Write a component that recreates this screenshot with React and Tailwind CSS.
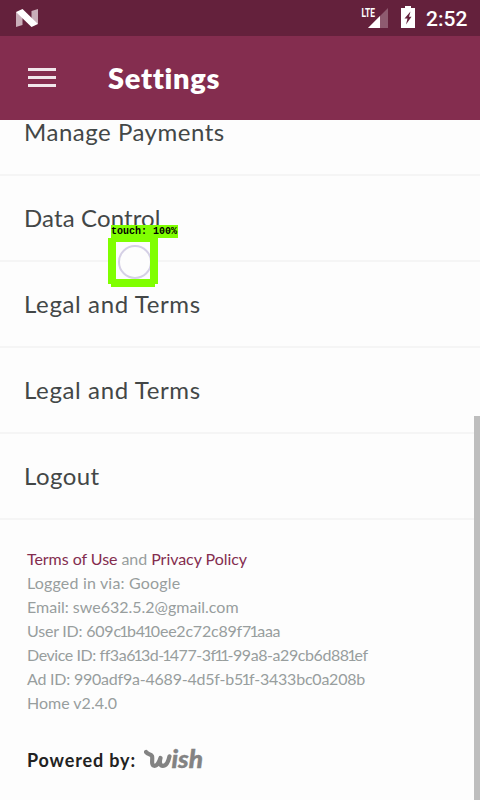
import { Fragment } from 'react';

const items = [
  { label: 'Manage Payments', spacing: 'tracking-[0.52px]' },
  { label: 'Data Control', spacing: 'tracking-[0.12px]' },
  { label: 'Legal and Terms', spacing: 'tracking-[0.63px]' },
  { label: 'Legal and Terms', spacing: 'tracking-[0.63px]' },
  { label: 'Logout', spacing: 'tracking-[0.45px]' },
];

const details = [
  { text: 'Logged in via: Google', spacing: 'tracking-[0.18px]' },
  { text: 'Email: swe632.5.2@gmail.com', spacing: 'tracking-normal' },
  { text: 'User ID: 609c1b410ee2c72c89f71aaa', spacing: 'tracking-[-0.21px]' },
  { text: 'Device ID: ff3a613d-1477-3f11-99a8-a29cb6d881ef', spacing: 'tracking-[-0.43px]' },
  { text: 'Ad ID: 990adf9a-4689-4d5f-b51f-3433bc0a208b', spacing: 'tracking-[-0.22px]' },
  { text: 'Home v2.4.0', spacing: 'tracking-normal' },
];

// Sets the digit 1 on a narrower width than the font's tabular figures.
function NarrowOnes({ text }) {
  return text.split('1').map((part, i) => (
    <Fragment key={i}>
      {i > 0 && <span className="-mx-[1.5px]">1</span>}
      {part}
    </Fragment>
  ));
}

function StatusBar() {
  return (
    <div className="flex h-9 shrink-0 items-center bg-[#64213c] pl-4 pr-3">
      <svg width="22" height="18" viewBox="0 0 22 18">
        <path d="M0 3 L6.5 5 V16 L0 18 Z" fill="#c9aeb9" />
        <path d="M15.5 2 L22 0 V15 L15.5 13 Z" fill="#c9aeb9" />
        <path d="M0 3 L6.5 0 L22 15 L15.5 18 Z" fill="#fff" />
      </svg>
      <div className="ml-auto flex items-center">
        <svg width="28" height="24" viewBox="0 0 28 24">
          <path d="M28 2 V22 H8 Z" fill="#8e5b70" />
          <path d="M20 10 V22 H8 Z" fill="#fff" />
          <path d="M0 0 H15.500 V12 H0 Z" fill="#64213c" />
          <text x="1.500" y="11" fontSize="12.500" fontWeight="700" textLength="13.500" lengthAdjust="spacingAndGlyphs" fill="#fff" fontFamily="Roboto, sans-serif">LTE</text>
        </svg>
        <svg width="14" height="22" viewBox="0 0 14 22" className="ml-[13px] mb-0.5">
          <path d="M4 0 H10 V2 H14 V22 H0 V2 H4 Z" fill="#fff" />
          <path d="M9.500 5.500 L3.500 12.500 H6.500 L5 18.500 L10.500 10.800 H8 Z" fill="#64213c" />
        </svg>
        <span className="ml-[11px] mt-0.5 w-[42px] whitespace-nowrap font-['Roboto',sans-serif] text-[21px] leading-6 font-medium text-white">2:52</span>
      </div>
    </div>
  );
}

function WishLogo() {
  return (
    <svg width="62" height="26" viewBox="0 0 62 26" fill="none">
      <path
        d="M2 5 C4 8 6.500 6.500 8 9 C9 11.500 6.500 18.800 10.500 18.800 C14 18.800 15.500 14 16.500 11 C15.500 14.500 15.500 18.800 19 18.800 C23 18.800 24.500 14 25.500 9.300"
        stroke="#838383" strokeWidth="4.200" strokeLinecap="round" strokeLinejoin="round"
      />
      <text x="27.500" y="21" fontSize="25" fontWeight="900" fontStyle="italic" textLength="31.500" lengthAdjust="spacingAndGlyphs" fill="#838383" stroke="#838383" strokeWidth="0.400" fontFamily="Lato, sans-serif">ish</text>
    </svg>
  );
}

export default function App() {
  return (
    <div className="relative flex h-[800px] w-[480px] flex-col overflow-hidden bg-[#fdfdfd] font-['Lato',sans-serif]">
      <StatusBar />
      <header className="flex h-[84px] shrink-0 items-center bg-[#842d4f] pl-7">
        <div className="mb-0.5 flex flex-col gap-[5px]">
          <div className="h-[3px] w-7 bg-[#f1e6eb]" />
          <div className="h-[3px] w-7 bg-[#f1e6eb]" />
          <div className="h-[3px] w-7 bg-[#f1e6eb]" />
        </div>
        <h1 className="ml-[52px] text-[29px] leading-9 font-extrabold tracking-[0.7px] text-white">Settings</h1>
      </header>
      <main className="flex min-h-0 flex-1 flex-col overflow-hidden">
        <ul className="-mt-[30px] shrink-0">
          {items.map((item, i) => (
            <li key={i} className="flex h-[86px] items-center border-b-2 border-[#f5f5f5] pl-6 text-2xl text-[#434747]">
              <span className={item.spacing}>{item.label}</span>
            </li>
          ))}
        </ul>
        <div className="mt-[27px] pl-[27px] text-base leading-6 text-[#989e9e]">
          <p className="tracking-[-0.05px]">
            <span className="text-[#842d4f]">Terms of Use</span> and <span className="text-[#842d4f]">Privacy Policy</span>
          </p>
          {details.map((d) => (
            <p key={d.text} className={d.spacing}><NarrowOnes text={d.text} /></p>
          ))}
        </div>
        <div className="mt-8 flex items-center pl-[27px]">
          <span className="text-lg leading-6 font-bold tracking-[0.85px] text-[#222]">Powered by:</span>
          <span className="ml-2"><WishLogo /></span>
        </div>
      </main>
      <div className="absolute top-[416px] right-0 h-[384px] w-1.5 bg-[#bebebe]" />
      <div className="absolute top-[225px] left-[108px]">
        <div className="ml-[3px] h-[13px] w-[67px] bg-[#80ff00] font-['Liberation_Mono',monospace] text-[10px] leading-[13px] font-bold whitespace-nowrap text-black">
          touch: 100%
        </div>
        <div className="flex h-[46px] w-[50px] items-center justify-center overflow-hidden border-x-8 border-t-4 border-b-[5px] border-[#80ff00] bg-[#fdfdfd]">
          <div className="mt-0.5 ml-1 size-[34px] shrink-0 rounded-full border-2 border-[#d5d0e5]" />
        </div>
        <div className="ml-[3px] h-[3px] w-11 bg-[#80ff00]" />
      </div>
    </div>
  );
}
